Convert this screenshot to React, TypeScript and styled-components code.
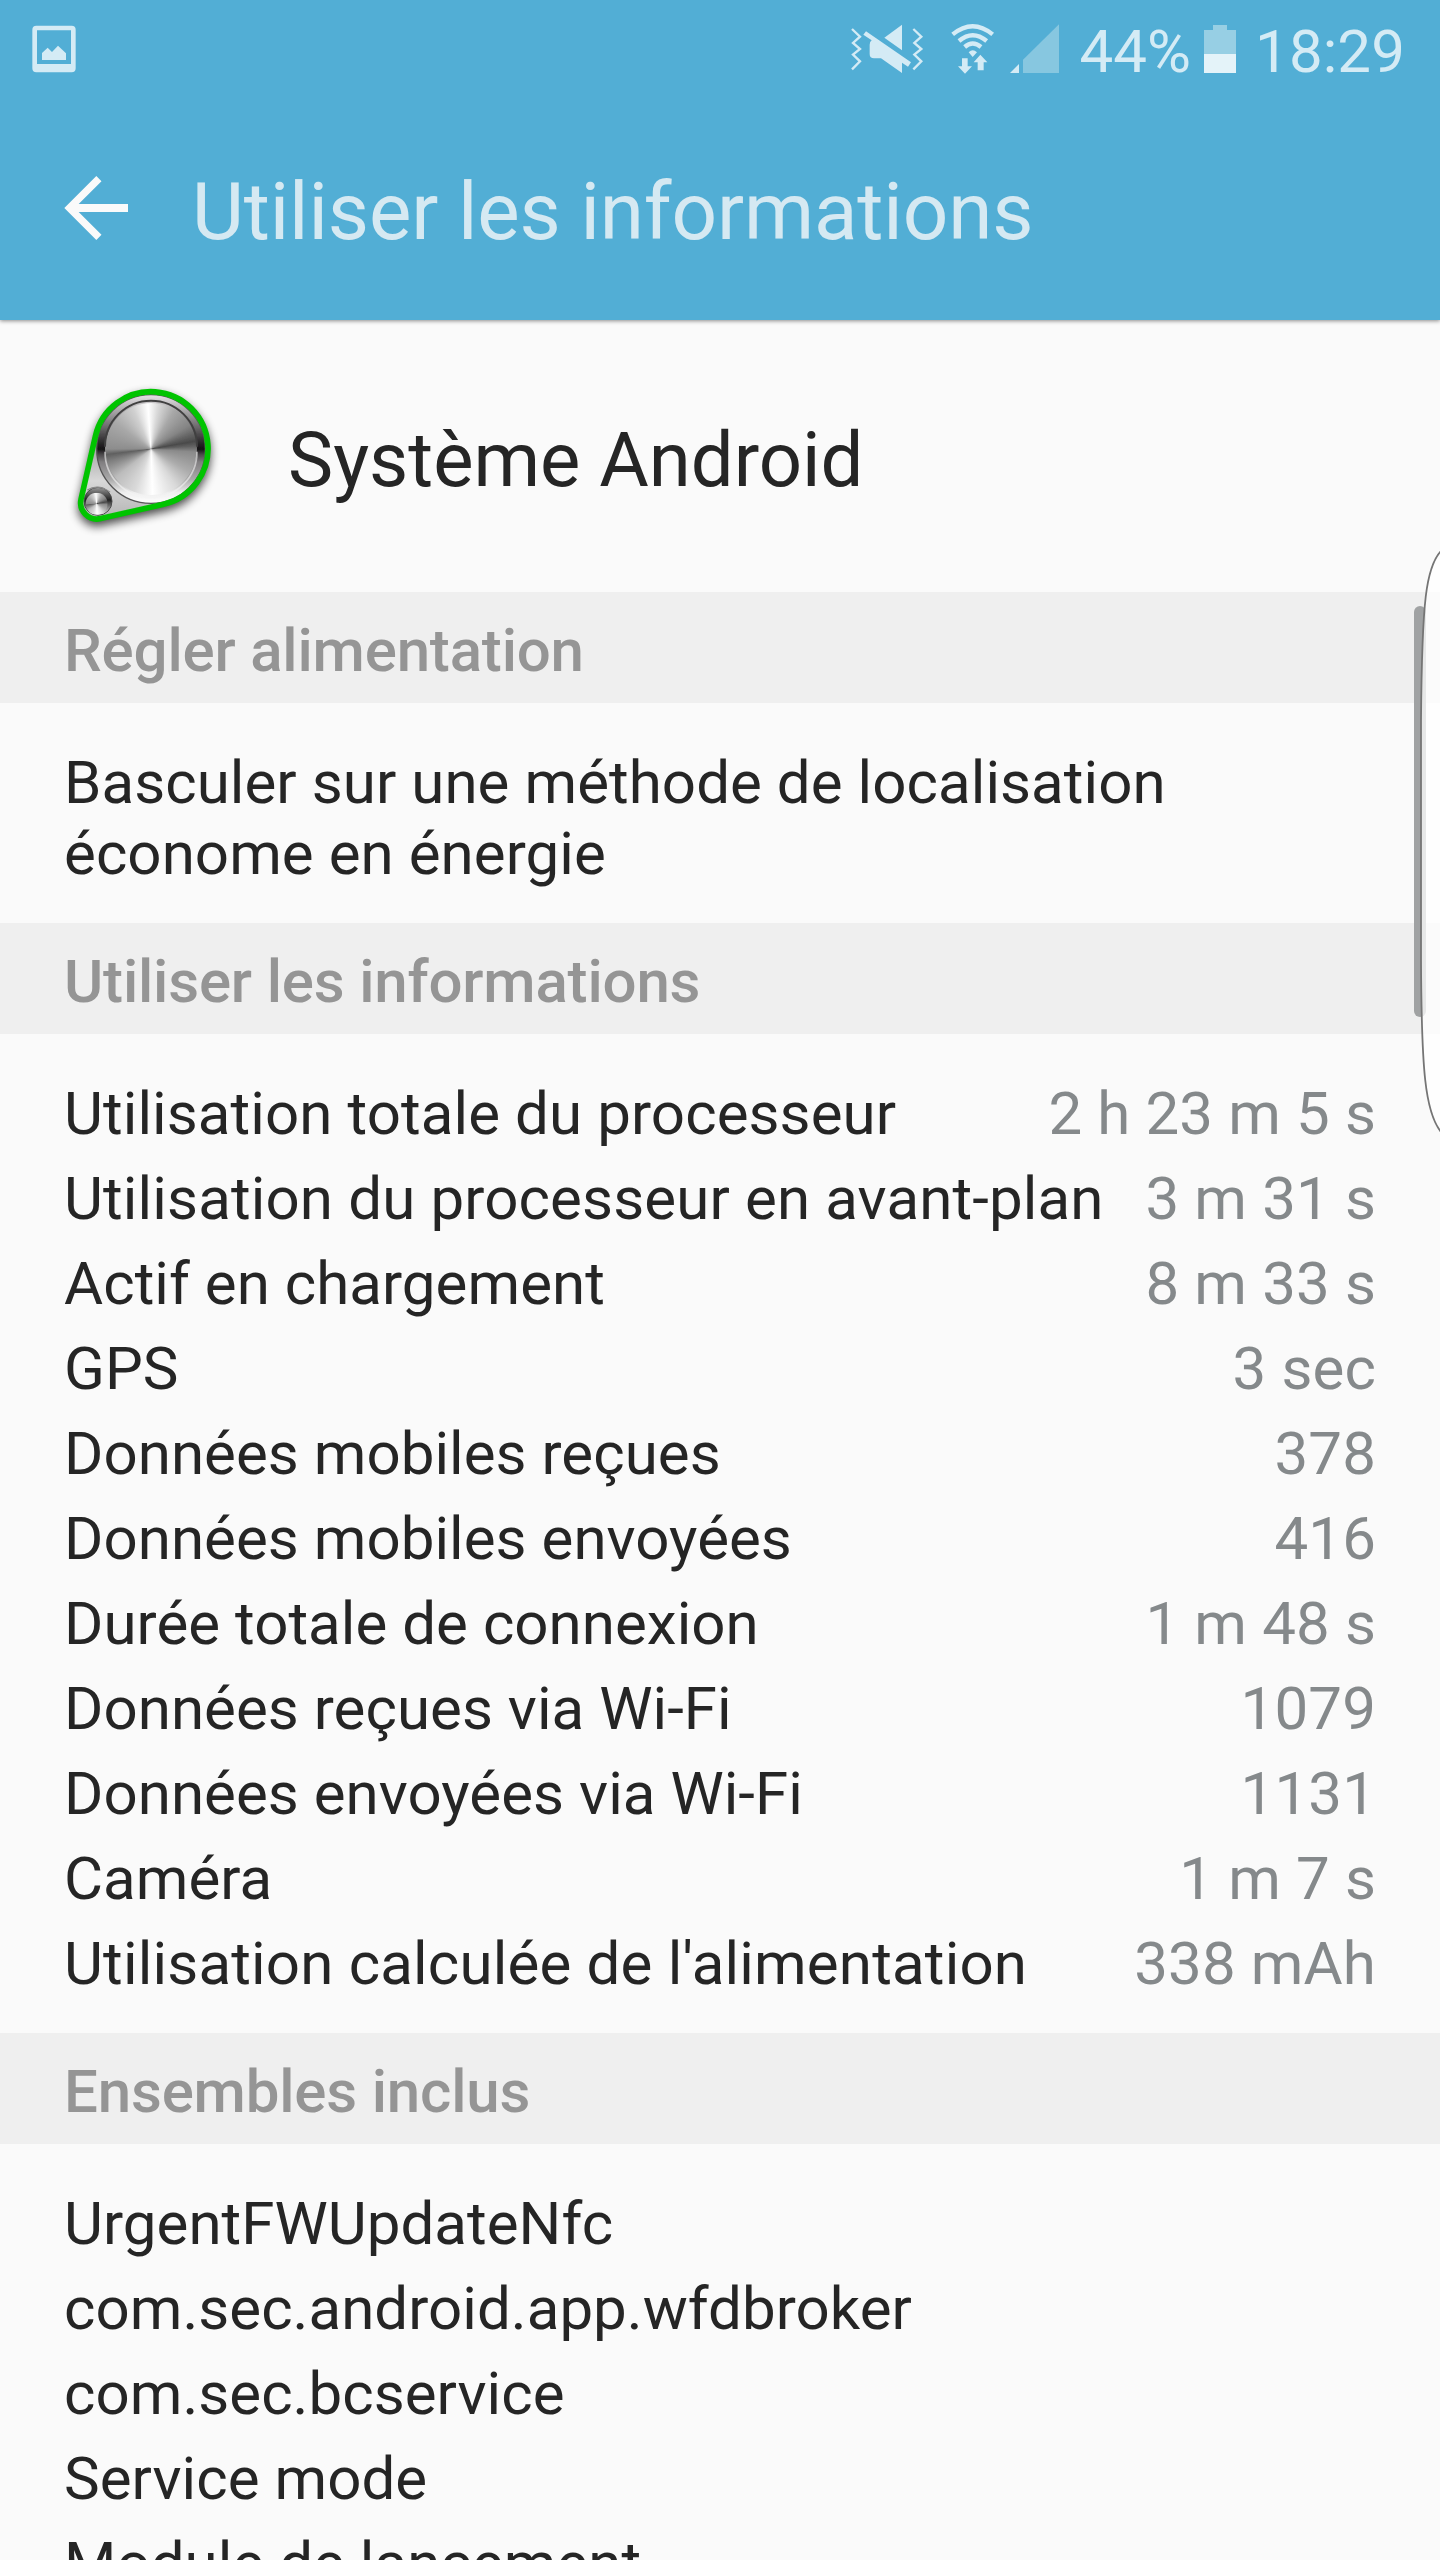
import React from "react";
import styled, { createGlobalStyle } from "styled-components";

const GlobalStyle = createGlobalStyle`
  * { box-sizing: border-box; }
  html, body { margin: 0; padding: 0; background: #fafafa; }
  body { overflow: hidden; }
`;

const Screen = styled.div`
  position: relative;
  display: flex;
  flex-direction: column;
  width: 1440px;
  height: 2560px;
  overflow: hidden;
  background: #fafafa;
  color: #252525;
  font-family: Roboto, "Liberation Sans", sans-serif;
  font-size: 60px;
  line-height: 71px;
`;

const Header = styled.header`
  flex: none;
  height: 320px;
  background: #52aed5;
  box-shadow: 0 1px 4px rgba(0, 0, 0, 0.45);
`;

const StatusBar = styled.div`
  display: flex;
  align-items: flex-start;
  height: 96px;
  padding: 0 35px 0 32px;
  color: #d4ebf5;
`;

const Glyph = styled.svg<{ $gap?: number; $top?: number }>`
  display: block;
  flex: none;
  margin-left: ${(p) => p.$gap ?? 0}px;
  margin-top: ${(p) => p.$top ?? 0}px;
`;

const StatusIcons = styled.div`
  display: flex;
  margin-left: auto;
`;

const StatusText = styled.span<{ $gap: number }>`
  margin-left: ${(p) => p.$gap}px;
  padding-top: 16px;
  letter-spacing: 0.1px;
  white-space: nowrap;
`;

const TitleBar = styled.div`
  display: flex;
  height: 224px;
  padding-left: 64px;
`;

const Title = styled.h1`
  margin: 69px 0 0 64px;
  color: #d5e9f2;
  font-size: 80px;
  font-weight: 400;
  line-height: 94px;
  letter-spacing: -0.13px;
  white-space: nowrap;
`;

const AppSummary = styled.section`
  flex: none;
  display: flex;
  height: 272px;
`;

const AppIcon = styled.svg`
  display: block;
  flex: none;
  width: 200px;
  height: 200px;
  margin: 40px 0 0 50px;
`;

const BrushedDisc = styled.div<{ $turn: number }>`
  width: 100%;
  height: 100%;
  border-radius: 50%;
  background: conic-gradient(
    from ${(p) => p.$turn}deg,
    #fff 0deg, #d8d8d8 14deg, #a8a8a8 35deg, #858585 62deg, #4a4a4a 84deg,
    #606060 90deg, #8a8a8a 98deg, #acacac 125deg, #d9d9d9 150deg, #fff 182deg,
    #dadada 205deg, #bcbcbc 235deg, #7d7d7d 258deg, #606060 267deg, #8d8d8d 274deg,
    #a8a8a8 310deg, #d0d0d0 340deg, #fff 360deg
  );
`;

const AppName = styled.h2`
  margin: 95px 0 0 38px;
  font-size: 76px;
  font-weight: 400;
  line-height: 90px;
  white-space: nowrap;
`;

const SectionTitle = styled.h3`
  flex: none;
  height: 111px;
  margin: 0;
  padding: 23px 64px 0;
  background: #efefef;
  color: #959595;
  font-size: 60px;
  font-weight: 500;
  line-height: 71px;
  letter-spacing: -0.18px;
  white-space: nowrap;
`;

const SectionBody = styled.section<{ $height?: number }>`
  flex: none;
  display: flex;
  flex-direction: column;
  gap: 14px;
  height: ${(p) => (p.$height ? `${p.$height}px` : "auto")};
  padding: 44px 64px 0;
`;

const Suggestion = styled.p`
  margin: 0;
  letter-spacing: 0.07px;
`;

const Row = styled.div`
  display: flex;
  justify-content: space-between;
  height: 71px;
  letter-spacing: 0.05px;
  white-space: nowrap;
`;

const Label = styled.span<{ $tracking: number }>`
  letter-spacing: ${(p) => p.$tracking}px;
`;

const Value = styled.span`
  color: #85898b;
  letter-spacing: 0.14px;
`;

const ScrollThumb = styled.div`
  position: absolute;
  top: 605.5px;
  left: 1414px;
  width: 12px;
  height: 411.5px;
  border-radius: 6px;
  background: #a0a2a3;
`;

const EdgeHandle = styled.svg`
  position: absolute;
  top: 540px;
  left: 1414px;
  display: block;
`;

const usage: { label: string; value: string; tracking?: number }[] = [
  { label: "Utilisation totale du processeur", value: "2 h 23 m 5 s", tracking: 0.1 },
  { label: "Utilisation du processeur en avant-plan", value: "3 m 31 s", tracking: 0.15 },
  { label: "Actif en chargement", value: "8 m 33 s" },
  { label: "GPS", value: "3 sec" },
  { label: "Données mobiles reçues", value: "378" },
  { label: "Données mobiles envoyées", value: "416" },
  { label: "Durée totale de connexion", value: "1 m 48 s" },
  { label: "Données reçues via Wi-Fi", value: "1079" },
  { label: "Données envoyées via Wi-Fi", value: "1131" },
  { label: "Caméra", value: "1 m 7 s" },
  { label: "Utilisation calculée de l'alimentation", value: "338 mAh", tracking: 0.19 },
];

const packages = [
  "UrgentFWUpdateNfc",
  "com.sec.android.app.wfdbroker",
  "com.sec.bcservice",
  "Service mode",
  "Module de lancement",
];

const PictureGlyph = () => (
  <Glyph $top={25} width="44" height="48" viewBox="96 75 132 144" fill="currentColor">
    <path
      fillRule="evenodd"
      d="M109 77H215Q227 77 227 89V205Q227 217 215 217H109Q97 217 97 205V89Q97 77 109 77ZM111 91V192H213V91Z"
    />
    <path d="M126 180V159L143 143L156 156L174 137L198 160V180Z" />
  </Glyph>
);

const MuteGlyph = () => (
  <Glyph $top={23} width="74" height="52" viewBox="60 69 222 156" fill="currentColor">
    <g fill="none" stroke="currentColor" strokeWidth="7">
      <path d="M66 87L90 110L69 129L90 147L69 164L90 184L66 208" />
      <path d="M250 87L274 110L253 129L274 147L253 164L274 184L250 208" />
    </g>
    <path d="M163 113L216 74V151Z" />
    <path d="M108 94L243 187L234 200L216 188V219L153 175H132Q119 175 119 162V134Q119 125 125 121L100 104Z" />
  </Glyph>
);

const WifiGlyph = () => (
  <Glyph $gap={27} $top={23} width="44" height="52" viewBox="362 69 132 156" fill="currentColor">
    <g fill="none" stroke="currentColor" strokeWidth="13">
      <path d="M367 103Q427 54 487 103" />
      <path d="M386 123Q427 88 469 123" />
      <path d="M403 141Q427 120 452 141" />
    </g>
    <path d="M415 157Q427 145 440 157L427 171Z" />
    <path d="M395 175H412V199H425L404 221L383 199H395Z" />
    <path d="M450 164L471 187H460V211H442V187H430Z" />
  </Glyph>
);

const SignalGlyph = () => (
  <Glyph $gap={15} $top={23} width="49" height="52" viewBox="540 69 147 156" fill="currentColor">
    <path d="M540 219L567 192V219Z" />
    <path d="M579 219V179L687 73V219Z" fill="#87c7e0" />
  </Glyph>
);

const BatteryGlyph = () => (
  <Glyph $gap={13} $top={25} width="32" height="48" viewBox="0 0 32 48">
    <path d="M9 0H23V5H32V29H0V5H9Z" fill="#97cfe4" />
    <path d="M0 29H32V48H0Z" fill="#e4f3f9" />
  </Glyph>
);

const BackArrow = () => (
  <Glyph $top={80} width="64" height="64" viewBox="192 528 192 192">
    <path
      d="M289 528L304.500 543.500L236 612H384V636H236L304.500 704.500L289 720L193 624Z"
      fill="#fafafa"
    />
  </Glyph>
);

const beltPath =
  "M136.300 228.100A171 171 0 1 1 340.900 432.700L151.900 475.800A49 49 0 0 1 93.200 417.100Z";

const PulleyIcon = () => (
  <AppIcon viewBox="0 0 600 600">
    <defs>
      <filter id="shade" x="-20%" y="-20%" width="140%" height="140%">
        <feGaussianBlur stdDeviation="14" />
      </filter>
      <filter id="soften">
        <feGaussianBlur stdDeviation="2" />
      </filter>
      <linearGradient id="rim" x1="0" y1="0" x2="0" y2="1">
        <stop offset="0" stopColor="#e6e3e6" />
        <stop offset="0.120" stopColor="#b5b3b5" />
        <stop offset="0.300" stopColor="#6a686a" />
        <stop offset="0.440" stopColor="#2b292b" />
        <stop offset="0.500" stopColor="#141214" />
        <stop offset="0.550" stopColor="#4b494b" />
        <stop offset="0.620" stopColor="#807e80" />
        <stop offset="0.780" stopColor="#aaa" />
        <stop offset="0.900" stopColor="#eee" />
        <stop offset="1" stopColor="#fff" />
      </linearGradient>
      <linearGradient id="plate" x1="0" y1="0" x2="0" y2="1">
        <stop offset="0.300" stopColor="#8a8a8a" />
        <stop offset="0.700" stopColor="#d8d8d8" />
        <stop offset="1" stopColor="#b4b4b4" />
      </linearGradient>
      <linearGradient id="smallRim" x1="0" y1="0" x2="0" y2="1">
        <stop offset="0" stopColor="#999" />
        <stop offset="0.450" stopColor="#222" />
        <stop offset="1" stopColor="#eee" />
      </linearGradient>
    </defs>
    <path d={beltPath} transform="translate(0 14)" fill="#000" stroke="#000" strokeWidth="16" opacity="0.700" filter="url(#shade)" />
    <g filter="url(#soften)">
      <path d={beltPath} fill="url(#plate)" />
      <circle cx="303" cy="267" r="163" fill="url(#rim)" stroke="#555" strokeWidth="4" />
      <foreignObject x="165" y="129" width="276" height="276">
        <BrushedDisc $turn={-4} />
      </foreignObject>
      <path d="M165 260A138 138 0 0 1 441 260" fill="none" stroke="#414141" strokeWidth="6" />
      <path d="M165 275A138 138 0 0 0 441 275" fill="none" stroke="#f3f3f3" strokeWidth="5" opacity="0.600" />
      <circle cx="144" cy="424" r="42" fill="url(#smallRim)" stroke="#4a4a4a" strokeWidth="3" />
      <path d="M112 390Q145 370 180 397" fill="none" stroke="#8a8a8a" strokeWidth="4" />
      <foreignObject x="107" y="398" width="66" height="66">
        <BrushedDisc $turn={-4} />
      </foreignObject>
      <path d={beltPath} fill="none" stroke="#06c406" strokeWidth="17" />
    </g>
  </AppIcon>
);

export default function App() {
  return (
    <Screen>
      <GlobalStyle />
      <Header>
        <StatusBar>
          <PictureGlyph />
          <StatusIcons>
            <MuteGlyph />
            <WifiGlyph />
            <SignalGlyph />
            <StatusText $gap={20}>44%</StatusText>
            <BatteryGlyph />
            <StatusText $gap={19}>18:29</StatusText>
          </StatusIcons>
        </StatusBar>
        <TitleBar>
          <BackArrow />
          <Title>Utiliser les informations</Title>
        </TitleBar>
      </Header>
      <AppSummary>
        <PulleyIcon />
        <AppName>Système Android</AppName>
      </AppSummary>
      <SectionTitle>Régler alimentation</SectionTitle>
      <SectionBody $height={220}>
        <Suggestion>
          Basculer sur une méthode de localisation économe en énergie
        </Suggestion>
      </SectionBody>
      <SectionTitle>Utiliser les informations</SectionTitle>
      <SectionBody $height={999}>
        {usage.map(({ label, value, tracking }) => (
          <Row key={label}>
            <Label $tracking={tracking ?? 0.05}>{label}</Label>
            <Value>{value}</Value>
          </Row>
        ))}
      </SectionBody>
      <SectionTitle>Ensembles inclus</SectionTitle>
      <SectionBody>
        {packages.map((name) => (
          <Row key={name}>{name}</Row>
        ))}
      </SectionBody>
      <ScrollThumb />
      <EdgeHandle width="26" height="604" viewBox="1414 540 26 604">
        <path
          d="M1441 551C1426 567 1422 600 1421 720V960C1421.500 1070 1425 1112 1441 1132Z"
          fill="#fff"
          fillOpacity="0.750"
          stroke="#757575"
          strokeWidth="1.800"
        />
      </EdgeHandle>
    </Screen>
  );
}
